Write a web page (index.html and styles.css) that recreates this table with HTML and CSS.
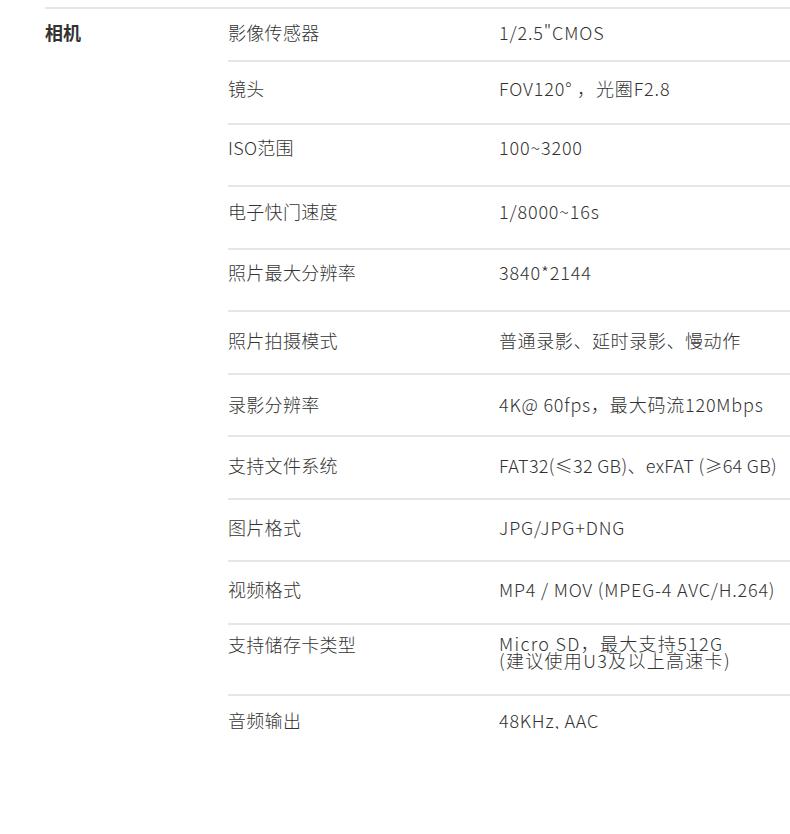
FILE: index.html
```html
<!DOCTYPE html>
<html lang="zh-CN">
<head>
<meta charset="utf-8">
<title>相机参数</title>
<link rel="stylesheet" href="styles.css">
</head>
<body>
<section class="spec">
  <h3 class="cat">相机</h3>
  <div class="rows">
    <div class="row first"><div class="k">影像传感器</div><div class="v">1/2.5"CMOS</div></div>
    <div class="row high"><div class="k">镜头</div><div class="v">FOV120° ，光圈F2.8</div></div>
    <div class="row up"><div class="k">ISO范围</div><div class="v">100~3200</div></div>
    <div class="row up2"><div class="k">电子快门速度</div><div class="v">1/8000~16s</div></div>
    <div class="row up"><div class="k">照片最大分辨率</div><div class="v">3840*2144</div></div>
    <div class="row"><div class="k">照片拍摄模式</div><div class="v cjk">普通录影、延时录影、慢动作</div></div>
    <div class="row low"><div class="k">录影分辨率</div><div class="v tight">4K@ 60fps，最大码流120Mbps</div></div>
    <div class="row"><div class="k">支持文件系统</div><div class="v flat">FAT32(≤32 GB)、exFAT (≥64 GB)</div></div>
    <div class="row mid"><div class="k">图片格式</div><div class="v">JPG/JPG+DNG</div></div>
    <div class="row mid"><div class="k">视频格式</div><div class="v tight">MP4 / MOV (MPEG-4 AVC/H.264)</div></div>
    <div class="row tall"><div class="k">支持储存卡类型</div><div class="v multi"><span class="ln">Micro SD，最大支持512G</span><span class="ln">(建议使用U3及以上高速卡)</span></div></div>
    <div class="row last"><div class="k">音频输出</div><div class="v tight">48KHz, AAC</div></div>
  </div>
</section>
</body>
</html>
```

FILE: styles.css
```css
html, body {
  margin: 0;
  padding: 0;
  background: #fff;
}

body {
  font-family: "Noto Sans CJK SC", "Noto Sans", sans-serif;
  color: #333;
  font-size: 18px;
  line-height: 18px;
}

.spec {
  display: grid;
  grid-template-columns: 183px 1fr;
  margin: 7px 0 0 45px;
  border-top: 2px solid #e6e6e6;
}

.cat {
  margin: 0;
  padding-top: 14px;
  font-size: 18px;
  line-height: 18px;
  font-weight: 700;
  color: #333;
}

.rows {
  display: flex;
  flex-direction: column;
}

.row {
  box-sizing: border-box;
  height: 62.5px;
  display: grid;
  grid-template-columns: 271px 1fr;
  padding-top: 19px;
  border-bottom: 2px solid #e6e6e6;
}

.row.first {
  height: 53px;
  padding-top: 14px;
}

.row.high {
  padding-top: 17px;
}

.row.mid {
  padding-top: 18px;
}

.row.low {
  padding-top: 20px;
}

.row.up {
  padding-top: 13px;
}

.row.up2 {
  padding-top: 15px;
}

.row.tall {
  height: 71px;
  padding-top: 10px;
}

.row.last {
  border-bottom: none;
  height: auto;
  padding-top: 15px;
}

.k {
  letter-spacing: 0.3px;
  white-space: nowrap;
  font-weight: 300;
}

.v {
  letter-spacing: 0.85px;
  white-space: nowrap;
  font-weight: 300;
}

.v.cjk {
  letter-spacing: 0.6px;
}

.v.tight {
  letter-spacing: 0.8px;
}

.v.flat {
  letter-spacing: 0.3px;
}

.v.multi {
  display: flex;
  flex-direction: column;
  line-height: 17px;
  letter-spacing: 1.3px;
}

.ln {
  display: block;
  height: 17px;
}
```
